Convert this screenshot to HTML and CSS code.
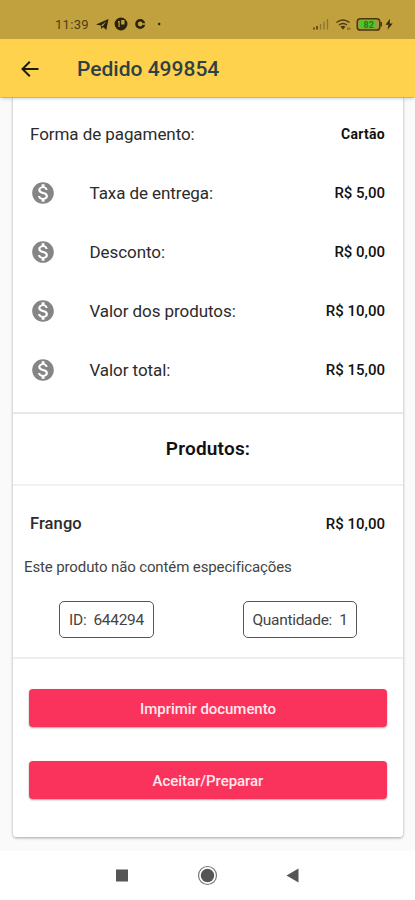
FILE: index.html
```html
<!DOCTYPE html>
<html lang="pt-BR">
<head>
<meta charset="utf-8">
<title>Pedido 499854</title>
<link rel="stylesheet" href="styles.css">
</head>
<body>
<svg class="symbols" aria-hidden="true">
  <symbol id="money" viewBox="0 0 24 24"><path fill="currentColor" d="M12 2C6.48 2 2 6.48 2 12s4.48 10 10 10 10-4.480 10-10S17.520 2 12 2zm1.410 16.090V20h-2.670v-1.930c-1.710-.36-3.160-1.460-3.270-3.400h1.960c.1 1.050.82 1.870 2.650 1.870 1.960 0 2.400-.98 2.400-1.590 0-.83-.44-1.610-2.670-2.140-2.480-.6-4.180-1.620-4.180-3.670 0-1.720 1.390-2.840 3.110-3.210V4h2.670v1.950c1.860.45 2.790 1.860 2.850 3.390H14.300c-.05-1.110-.64-1.870-2.220-1.870-1.500 0-2.400.68-2.400 1.640 0 .84.65 1.390 2.670 1.910s4.180 1.390 4.180 3.910c-.01 1.830-1.380 2.830-3.120 3.160z"/></symbol>
</svg>
<div class="status">
  <span class="clock">11:39</span>
  <svg class="notices" viewBox="0 0 68 16">
    <path d="M0 8.500L12.500 3l-2.200 11-3.100-3-1.900 1.900-.4-3.300z" fill="#2b230c"/>
    <path d="M5 9.500l5.300-4-3.600 4.800" fill="#c1a03e"/>
    <circle cx="25" cy="8" r="5.700" fill="#2b230c" stroke="#2b230c" stroke-width="1.500"/>
    <path d="M25.200 4h3.300v4.500h-3.300zM22 5h1.700v6h-1.200V6.500H22z" fill="#c1a03e"/>
    <circle cx="44.200" cy="8" r="3.700" fill="none" stroke="#2b230c" stroke-width="2.600"/>
    <path d="M46.200 7.200h3v1.600h-3z" fill="#c1a03e"/>
    <circle cx="63.200" cy="8" r="1.200" fill="#2b230c"/>
  </svg>
  <span class="grow"></span>
  <svg class="signals" viewBox="0 0 82 16">
    <path d="M2 11.500v2M5 10v3.500" stroke="#66501f" stroke-width="2"/>
    <path d="M8.500 8v5.500M12 5.500v8M15.500 3v10.500" stroke="#8d742d" stroke-width="1.300"/>
    <g fill="none" stroke="#4c3b16" stroke-width="1.500"><path d="M24.500 6.500q6.500-5.200 13 0M27 9q4-3.200 8 0"/></g>
    <path d="M28.500 10.500q2.500-1.700 5 0L31 13.700z" fill="#4c3b16"/>
    <path d="M35 11.500h3.500v2.300H35z" fill="#8d742d"/>
    <rect x="45.200" y="2.700" width="22.600" height="11.400" rx="3.200" fill="#a29a3c" stroke="#4b3510" stroke-width="1.500"/>
    <rect x="47.500" y="4.500" width="16" height="7.800" rx="1" fill="#4fc626"/>
    <path d="M69.200 6v4.500" stroke="#4b3510" stroke-width="1.600"/>
    <text x="51.500" y="11.500" class="charge">82</text>
    <path d="M78 2.700l-4.500 6h3l-1 5 5.200-6.300h-3z" fill="#352a0d"/>
  </svg>
</div>
<header class="appbar">
  <svg class="back" viewBox="0 0 18 18"><path d="M17.500 9H1.800M8.800 1.700L1.500 9l7.300 7.300" fill="none" stroke="#1d1a10" stroke-width="2"/></svg>
  <h1>Pedido 499854</h1>
</header>
<main class="page">
  <section class="card">
    <h2 class="values">Valores:</h2>
    <div class="row first"><span>Forma de pagamento:</span><b class="method">Cartão</b></div>
    <div class="row"><svg><use href="#money"/></svg><span>Taxa de entrega:</span><b>R$ 5,00</b></div>
    <div class="row"><svg><use href="#money"/></svg><span>Desconto:</span><b>R$ 0,00</b></div>
    <div class="row"><svg><use href="#money"/></svg><span>Valor dos produtos:</span><b>R$ 10,00</b></div>
    <div class="row"><svg><use href="#money"/></svg><span>Valor total:</span><b>R$ 15,00</b></div>
    <h2 class="products">Produtos:</h2>
    <div class="product">
      <div class="row item"><strong>Frango</strong><b>R$ 10,00</b></div>
      <p>Este produto não contém especificações</p>
      <div class="chips"><span class="chip id">ID:&nbsp; 644294</span><span class="chip qty">Quantidade:&nbsp; 1</span></div>
    </div>
    <div class="actions">
      <button>Imprimir documento</button>
      <button>Aceitar/Preparar</button>
    </div>
  </section>
</main>
<nav class="nav">
  <svg viewBox="0 0 190 24">
    <rect x="4" y="5.500" width="12" height="12" fill="#555"/>
    <circle cx="95.500" cy="11.500" r="9" fill="none" stroke="#777" stroke-width="1.200"/><circle cx="95.500" cy="11.500" r="6.700" fill="#555"/>
    <path d="M186.500 4.500v14l-12-7z" fill="#555"/>
  </svg>
</nav>
</body>
</html>
```
FILE: styles.css
```css
* { box-sizing: border-box; }
body { margin: 0; width: 415px; height: 900px; overflow: hidden; display: flex; flex-direction: column; background: #fafafa; color: #2b2b2b; font-family: Roboto, sans-serif; }
.symbols { display: none; }
.status { height: 39px; flex: none; display: flex; align-items: flex-start; padding: 16px 21px 0 55px; background: #c1a03e; }
.clock { font-size: 13px; line-height: 17px; width: 41px; letter-spacing: .3px; color: #4c3d18; }
.notices { width: 68px; height: 16px; }
.grow { flex: 1; }
.signals { width: 82px; height: 16px; }
.charge { font-size: 9px; font-weight: 700; fill: #277b18; }
.appbar { height: 58px; flex: none; display: flex; align-items: center; gap: 38px; padding-left: 21px; background: #ffd24d; position: relative; z-index: 1; box-shadow: 0 3px 3px -1px rgba(0,0,0,.16); }
.back { width: 18px; height: 18px; margin-top: 1px; }
h1, h2, p { margin: 0; }
h1 { font-size: 21px; font-weight: 500; letter-spacing: 0; color: #2d4146; padding-top: 2px; }
.page { height: 754px; flex: none; padding: 0 12px 14px 13px; overflow: hidden; background: linear-gradient(#ffd24d 1px, #fafafa 1px); }
.card { height: 740px; background: linear-gradient(#ffd24d 1px, #fff 1px); border-radius: 0 0 4px 4px; box-shadow: 0 1px 3px rgba(0,0,0,.36); display: flex; flex-direction: column; }
.values { height: 6px; line-height: 24px; margin-top: -18px; margin-bottom: 19px; text-align: center; font-size: 18px; font-weight: 500; color: #a88a38; }
.row { height: 59.200px; display: flex; align-items: center; padding: 0 18px 0 17px; font-size: 17px; }
.row svg { width: 26px; height: 26px; margin-right: 33.500px; color: #858585; }
.row span { letter-spacing: -.07px; }
.row b { margin-left: auto; font-size: 15px; font-weight: 500; color: #111; }
.row .method { font-size: 14px; font-weight: 700; letter-spacing: .3px; }
.products { height: 74px; margin-top: 12px; border-top: 2px solid #e8e8e8; border-bottom: 2px solid #f1f1f1; text-align: center; line-height: 69px; font-size: 19px; font-weight: 600; letter-spacing: .2px; color: #111; }
.product { height: 173px; border-bottom: 2px solid #eee; padding-top: 8px; }
.item strong { font-size: 16.500px; font-weight: 500; letter-spacing: .1px; }
.product p { padding-left: 11px; margin-top: 2px; font-size: 15px; letter-spacing: -.12px; line-height: 24px; color: #444; }
.chips { display: flex; justify-content: space-between; padding: 0 46px 0 46px; margin-top: 22px; }
.chip { height: 37px; border: 1px solid #555; border-radius: 5px; text-align: center; line-height: 36px; font-size: 15.500px; letter-spacing: -.3px; color: #444; white-space: nowrap; }
.id { width: 95px; }
.qty { width: 114px; }
.actions { display: flex; flex-direction: column; gap: 34px; padding: 30px 16px 0; }
button { height: 38px; border: 0; border-radius: 4px; background: #fa335c; color: #ffe9ee; padding-top: 3px; font: 500 15px Roboto, sans-serif; letter-spacing: -.05px; box-shadow: 0 1px 2px rgba(0,0,0,.35); }
.nav { flex: 1; background: #fff; display: flex; padding: 13px 0 0 112px; }
.nav svg { width: 190px; height: 24px; }
```
